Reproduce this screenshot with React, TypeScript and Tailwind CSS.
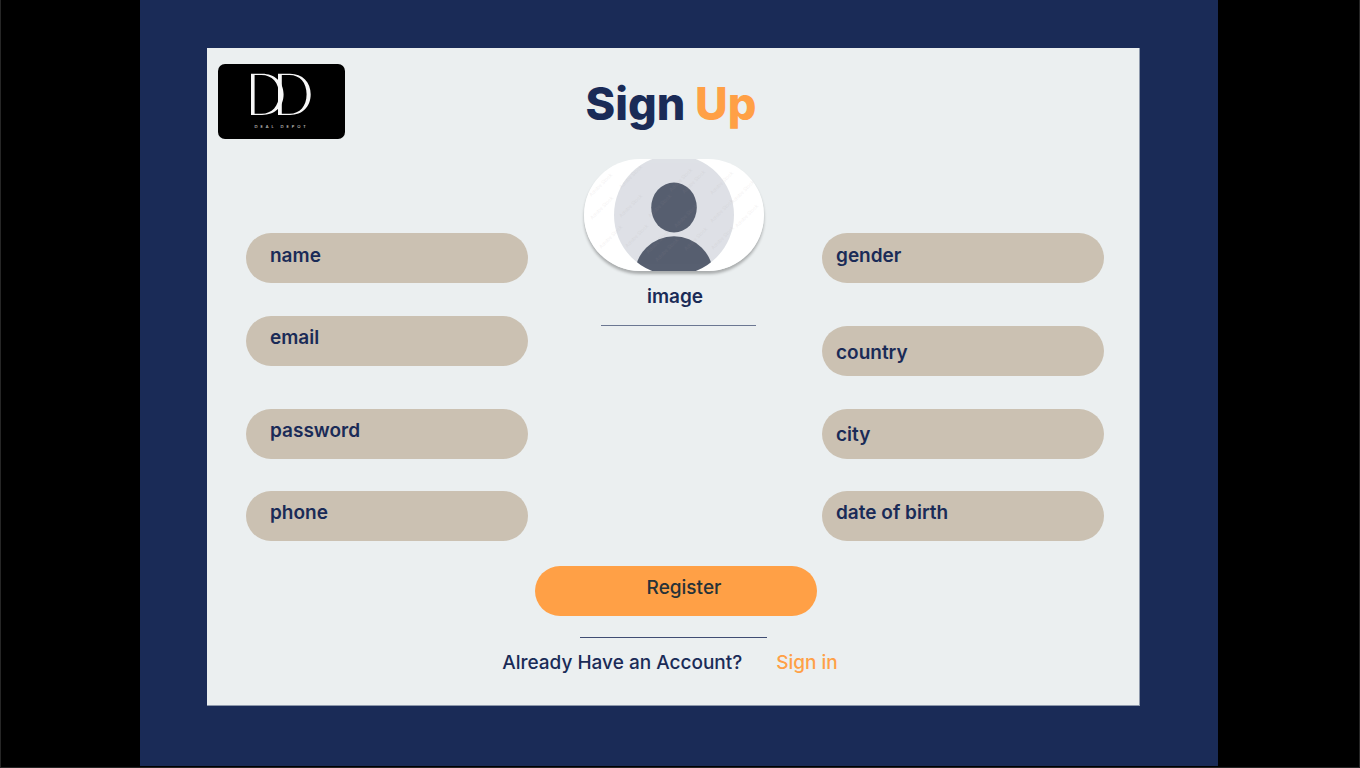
type FieldProps = {
  id: string;
  label: string;
  type?: string;
  className: string;
};

function Field({ id, label, type = 'text', className }: FieldProps) {
  return (
    <input
      id={id}
      name={id}
      type={type}
      aria-label={label}
      placeholder={label}
      className={`h-[50px] w-full rounded-full bg-[#cbc1b2] text-[19px] font-semibold text-[#1a2b57] outline-none placeholder:text-[#1a2b57] placeholder:opacity-100 focus:ring-2 focus:ring-[#1a2b57] ${className}`}
    />
  );
}

function Logo() {
  return (
    <svg viewBox="0 0 127 75" className="h-[75px] w-[127px]" role="img" aria-label="Deal Depot">
      <rect width="127" height="75" rx="7" fill="#000" />
      <g fill="#f7f7f7" fillRule="evenodd">
        <path d="M33 9.7H44C57 9.7 65.6 18 65.6 30.3S57 51 44 51H33ZM36.6 10.9V49.8H43.5C54 49.8 61 42 61 30.3S54 10.9 43.5 10.9Z" />
        <path d="M60 9.7H72C84.5 9.7 92.7 18 92.7 30.3S84.5 51 72 51H60ZM63.8 10.9V49.8H71.5C82 49.8 88.6 42 88.6 30.3S82 10.9 71.5 10.9Z" />
      </g>
      <text
        x="36.5"
        y="63.5"
        fill="#e4e4e4"
        className="font-['Lato',sans-serif] text-[4px] tracking-[3px]"
      >
        DEAL DEPOT
      </text>
    </svg>
  );
}

const watermarks = [
  [18, 27], [19, 50], [28, 79], [48, 19], [48, 48], [54, 78],
  [77, 48], [75, 84], [84, 92], [98, 22], [111, 24], [103, 58], [113, 81],
  [139, 25], [139, 53], [140, 80], [160, 34], [164, 58],
];

function Avatar() {
  return (
    <svg viewBox="0 0 180 112" className="mr-0.5 h-28 w-[180px] rounded-full shadow-[0_3px_3px_rgba(0,0,0,0.28)]" role="img" aria-label="Profile image">
      <defs>
        <clipPath id="disc">
          <circle cx="90" cy="56" r="60" />
        </clipPath>
      </defs>
      <rect width="180" height="112" fill="#fff" />
      <circle cx="90" cy="56" r="60" fill="#dee1e6" />
      <ellipse cx="90" cy="48.5" rx="22.8" ry="25" fill="#575f70" />
      <circle cx="90" cy="116.5" r="39.3" fill="#575f70" clipPath="url(#disc)" />
      <g aria-hidden="true" fill="#a08f92" opacity="0.13" textAnchor="middle" className="font-['Inter',sans-serif] text-[5px]">
        {watermarks.map(([x, y]) => (
          <text key={`${x}-${y}`} x={x} y={y} transform={`rotate(-45 ${x} ${y})`}>
            Adobe Stock
          </text>
        ))}
      </g>
    </svg>
  );
}

export default function App() {
  return (
    <div className="flex min-h-screen border-x border-b border-[#262626] bg-black pb-px pl-[139px] pr-[141px] font-['Inter',sans-serif] text-[#1a2b57]">
      <div className="flex grow flex-col bg-[#1a2b57] pb-[60px] pl-[67px] pr-[78px] pt-12">
        <main className="grow border-b border-r border-[#8d98ab] bg-[#ebeff0]">
          <header className="grid grid-cols-[1fr_auto_1fr] items-start px-[11px] pt-4">
            <Logo />
            <h1 className="pr-1 pt-3 text-[45px] font-extrabold leading-[56px]">
              Sign <span className="text-[#ffa046]">Up</span>
            </h1>
          </header>

          <form onSubmit={(event) => event.preventDefault()}>
            <div className="grid grid-cols-[282fr_294fr_282fr] pl-[39px] pr-[35px] pt-5">
              <div className="flex flex-col pt-[74px]">
                <Field id="name" label="name" className="mb-[33px] pb-1.5 pl-6 pr-6" />
                <Field id="email" label="email" type="email" className="mb-[43px] pb-2 pl-6 pr-6" />
                <Field id="password" label="password" type="password" className="mb-8 pb-2 pl-6 pr-6" />
                <Field id="phone" label="phone" type="tel" className="pb-2 pl-6 pr-6" />
              </div>

              <div className="flex flex-col items-center">
                <Avatar />
                <p className="pt-3 text-[19px] font-semibold leading-7">image</p>
                <div className="ml-1.5 mt-[14px] h-px w-[155px] bg-[#6b7792]" />
              </div>

              <div className="flex flex-col pt-[74px]">
                <Field id="gender" label="gender" className="mb-[43px] pb-1.5 pl-[14px] pr-6" />
                <Field id="country" label="country" className="mb-[33px] pl-[14px] pr-6 pt-0.5" />
                <Field id="city" label="city" className="mb-8 pl-[14px] pr-6" />
                <Field id="birth" label="date of birth" className="pb-2 pl-[14px] pr-6" />
              </div>
            </div>

            <div className="flex justify-center pl-1.5 pt-[25px]">
              <button
                type="submit"
                className="h-[50px] w-[282px] rounded-full bg-[#ffa046] pb-1.5 pl-4 text-[19px] font-medium text-[#263238]"
              >
                Register
              </button>
            </div>
          </form>

          <footer className="flex flex-col items-center pt-[21px]">
            <div className="h-px w-[187px] bg-[#3f4c72]" />
            <p className="flex gap-[34px] pr-1.5 pt-[11px] text-[19px] font-medium leading-7">
              Already Have an Account?
              <a href="#sign-in" className="text-[#ffa046]">
                Sign in
              </a>
            </p>
          </footer>
        </main>
      </div>
    </div>
  );
}
